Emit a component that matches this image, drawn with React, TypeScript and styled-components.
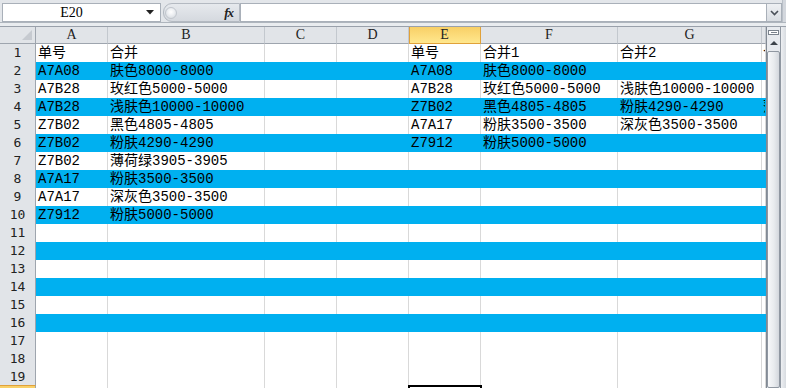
import React from "react";
import styled, { createGlobalStyle } from "styled-components";

const GlobalStyle = createGlobalStyle`
  html, body { margin: 0; padding: 0; width: 786px; height: 388px; overflow: hidden; background: #fff; }
  #root { width: 786px; height: 388px; }
  * { box-sizing: border-box; }
`;

const COL_KEYS = ["A", "B", "C", "D", "E", "F", "G", "H"] as const;
type ColKey = (typeof COL_KEYS)[number];
const COL_WIDTHS = [72, 157, 72, 72, 72, 137, 144, 4];
const TEMPLATE = `36px ${COL_WIDTHS.map((w) => w + "px").join(" ")}`;

const GRID = "#d9d9d9";
const BLUE = "#00b0f0";
const HEAD_BG = "#e1e4e8";
const HEAD_LINE = "#c3c8ce";
const HEAD_EDGE = "#9ea5ae";

const CELL_FONT = `"Liberation Mono", "Noto Sans CJK SC", monospace`;

const Window = styled.div`
  width: 786px;
  height: 388px;
  display: flex;
  flex-direction: column;
  overflow: hidden;
  background: #fff;
`;

const FormulaBar = styled.div`
  height: 22px;
  flex: none;
  display: flex;
  align-items: flex-start;
  padding: 3px 0 0 2px;
  background: #e3e6ea;
`;

const NameBox = styled.div`
  width: 159px;
  height: 19px;
  display: flex;
  align-items: center;
  background: #fff;
  border: 1px solid #a9b0b9;
`;

const NameText = styled.div`
  width: 137px;
  text-align: center;
  font-family: "Liberation Serif", serif;
  font-size: 14px;
  color: #000;
  line-height: 17px;
`;

const DropArrow = styled.div`
  width: 20px;
  display: flex;
  justify-content: center;
  align-items: center;
`;

const FxArea = styled.div`
  width: 77px;
  height: 19px;
  margin-left: 2px;
  display: flex;
  align-items: center;
  justify-content: space-between;
  padding: 0 6px 0 1px;
  background: linear-gradient(#e6e9ed, #d5d9df);
  border: 1px solid #b3b9c1;
  border-radius: 9px 0 0 9px;
`;

const Knob = styled.div`
  width: 12px;
  height: 12px;
  border-radius: 50%;
  border: 1px solid #c1c6cd;
  background: radial-gradient(circle at 50% 40%, #ffffff 0%, #eef0f3 40%, #cfd4da 100%);
`;

const Fx = styled.span`
  font-family: "Liberation Serif", serif;
  font-style: italic;
  font-weight: bold;
  font-size: 13px;
  color: #222;
  letter-spacing: -1px;
`;

const FormulaInput = styled.div`
  flex: 1;
  height: 19px;
  background: #fff;
  border: 1px solid #a9b0b9;
  border-right: none;
`;

const ExpandBtn = styled.div`
  width: 16px;
  height: 19px;
  display: flex;
  align-items: center;
  justify-content: center;
  background: linear-gradient(#eef0f3, #d9dde2);
  border: 1px solid #a9b0b9;
`;

const FrameEdge = styled.div`
  width: 4px;
  align-self: stretch;
  margin-top: -3px;
  background: #d3d7dd;
  border-left: 1px solid #b9bfc7;
`;

const Splitter = styled.div`
  height: 5px;
  flex: none;
  background: #e9ecef;
  border-top: 1px solid #aeb5bd;
  border-bottom: 1px solid #99a0aa;
`;

const Main = styled.div`
  flex: 1;
  display: flex;
  min-height: 0;
`;

const Sheet = styled.div`
  width: 766px;
  flex: none;
  display: flex;
  flex-direction: column;
  overflow: hidden;
`;

const RowLine = styled.div<{ $h: number }>`
  display: grid;
  grid-template-columns: ${TEMPLATE};
  height: ${(p) => p.$h}px;
  flex: none;
`;

const Corner = styled.div`
  background: ${HEAD_BG};
  border-right: 1px solid ${HEAD_EDGE};
  border-bottom: 1px solid ${HEAD_EDGE};
  display: flex;
  align-items: flex-end;
  justify-content: flex-end;
  padding: 0 3px 3px 0;
`;

const ColHead = styled.div<{ $sel?: boolean }>`
  background: ${(p) => (p.$sel ? "linear-gradient(#f8cf66, #ffe78e)" : HEAD_BG)};
  border-right: 1px solid ${(p) => (p.$sel ? "#e0a13a" : HEAD_LINE)};
  border-bottom: 1px solid ${(p) => (p.$sel ? "#e0a13a" : HEAD_EDGE)};
  box-shadow: ${(p) => (p.$sel ? "inset 1px 0 0 #e0a13a" : "none")};
  font-family: "Liberation Serif", serif;
  font-size: 14px;
  line-height: 16px;
  color: #222;
  text-align: center;
  overflow: hidden;
`;

const RowHead = styled.div<{ $sel?: boolean }>`
  background: ${(p) => (p.$sel ? "linear-gradient(#f8cf66, #ffe78e)" : HEAD_BG)};
  border-right: 1px solid ${HEAD_EDGE};
  border-bottom: 1px solid ${HEAD_LINE};
  border-top: ${(p) => (p.$sel ? "1px solid #e0a13a" : "none")};
  margin-top: ${(p) => (p.$sel ? "-1px" : "0")};
  font-family: "DejaVu Sans Mono", monospace;
  font-size: 13px;
  line-height: 18px;
  color: #222;
  text-align: center;
`;

const Cell = styled.div<{ $fill?: boolean; $sel?: boolean; $tight?: boolean }>`
  background: ${(p) => (p.$fill ? BLUE : "#fff")};
  border-right: 1px solid ${(p) => (p.$fill ? BLUE : GRID)};
  border-bottom: 1px solid ${(p) => (p.$fill ? BLUE : GRID)};
  padding: 2px 0 0 ${(p) => (p.$tight ? 1 : 2)}px;
  font-family: ${CELL_FONT};
  font-size: 14px;
  line-height: 15px;
  color: #000;
  white-space: nowrap;
  overflow: hidden;
  outline: ${(p) => (p.$sel ? "2px solid #000" : "none")};
  outline-offset: -1px;
  position: ${(p) => (p.$sel ? "relative" : "static")};
  z-index: ${(p) => (p.$sel ? 1 : "auto")};
`;

const VScroll = styled.div`
  width: 20px;
  flex: none;
  display: flex;
  background: #e7eaee;
  border-left: 1px solid #828a94;
`;

const ScrollTrack = styled.div`
  width: 13px;
  display: flex;
  flex-direction: column;
  align-items: stretch;
`;

const SplitBox = styled.div`
  height: 9px;
  display: flex;
  align-items: center;
  justify-content: center;
  padding-top: 1px;
`;

const SplitMark = styled.div`
  width: 11px;
  height: 5px;
  border: 1px solid #7b838d;
  background: #fff;
  display: flex;
  align-items: center;
  justify-content: center;
`;

const SplitDash = styled.div`
  width: 6px;
  height: 1px;
  background: #7b838d;
`;

const UpBtn = styled.div`
  height: 14px;
  display: flex;
  align-items: center;
  justify-content: center;
`;

const UpTri = styled.div`
  width: 0;
  height: 0;
  border-left: 4px solid transparent;
  border-right: 4px solid transparent;
  border-bottom: 4px solid #3d434a;
`;

const Thumb = styled.div`
  flex: 1;
  margin-top: 1px;
  border: 1px solid #8f97a1;
  border-radius: 2px;
  background: linear-gradient(90deg, #f7f8fa 0%, #e8ebee 55%, #d3d7dd 100%);
`;

const ScrollEdge = styled.div`
  flex: 1;
  border-left: 1px solid #8f97a1;
  background: linear-gradient(90deg, #eef0f3, #d7dbe0);
`;

type RowData = Partial<Record<ColKey, string>>;

const DATA: RowData[] = [
  { A: "单号", B: "合并", E: "单号", F: "合并1", G: "合并2", H: "合并3" },
  { A: "A7A08", B: "肤色8000-8000", E: "A7A08", F: "肤色8000-8000" },
  { A: "A7B28", B: "玫红色5000-5000", E: "A7B28", F: "玫红色5000-5000", G: "浅肤色10000-10000" },
  { A: "A7B28", B: "浅肤色10000-10000", E: "Z7B02", F: "黑色4805-4805", G: "粉肤4290-4290", H: "薄荷绿3905-3905" },
  { A: "Z7B02", B: "黑色4805-4805", E: "A7A17", F: "粉肤3500-3500", G: "深灰色3500-3500" },
  { A: "Z7B02", B: "粉肤4290-4290", E: "Z7912", F: "粉肤5000-5000" },
  { A: "Z7B02", B: "薄荷绿3905-3905" },
  { A: "A7A17", B: "粉肤3500-3500" },
  { A: "A7A17", B: "深灰色3500-3500" },
  { A: "Z7912", B: "粉肤5000-5000" },
];

const TOTAL_ROWS = 20;
const FILLED = new Set([2, 4, 6, 8, 10, 12, 14, 16]);

export default function App() {
  const rows = Array.from({ length: TOTAL_ROWS }, (_, i) => i + 1);
  return (
    <>
      <GlobalStyle />
      <Window>
        <FormulaBar>
          <NameBox>
            <NameText>E20</NameText>
            <DropArrow>
              <svg width="8" height="5" viewBox="0 0 8 5">
                <polygon points="0,0 8,0 4,4.5" fill="#222" />
              </svg>
            </DropArrow>
          </NameBox>
          <FxArea>
            <Knob />
            <Fx>fx</Fx>
          </FxArea>
          <FormulaInput />
          <ExpandBtn>
            <svg width="9" height="6" viewBox="0 0 9 6">
              <polyline points="1,1 4.5,4.5 8,1" fill="none" stroke="#4a5058" strokeWidth="1.6" />
            </svg>
          </ExpandBtn>
          <FrameEdge />
        </FormulaBar>
        <Splitter />
        <Main>
          <Sheet>
            <RowLine $h={17}>
              <Corner>
                <svg width="10" height="10" viewBox="0 0 10 10">
                  <polygon points="10,0 10,10 0,10" fill="#c6cad0" />
                </svg>
              </Corner>
              {COL_KEYS.map((k) => (
                <ColHead key={k} $sel={k === "E"}>
                  {k === "H" ? "" : k}
                </ColHead>
              ))}
            </RowLine>
            {rows.map((r) => {
              const d = DATA[r - 1] || {};
              const fill = FILLED.has(r);
              return (
                <RowLine key={r} $h={18}>
                  <RowHead $sel={r === 20}>{r}</RowHead>
                  {COL_KEYS.map((k) => (
                    <Cell key={k} $fill={fill} $sel={r === 20 && k === "E"} $tight={k === "H"}>
                      {d[k] || ""}
                    </Cell>
                  ))}
                </RowLine>
              );
            })}
          </Sheet>
          <VScroll>
            <ScrollTrack>
              <SplitBox>
                <SplitMark>
                  <SplitDash />
                </SplitMark>
              </SplitBox>
              <UpBtn>
                <UpTri />
              </UpBtn>
              <Thumb />
            </ScrollTrack>
            <ScrollEdge />
          </VScroll>
        </Main>
      </Window>
    </>
  );
}
